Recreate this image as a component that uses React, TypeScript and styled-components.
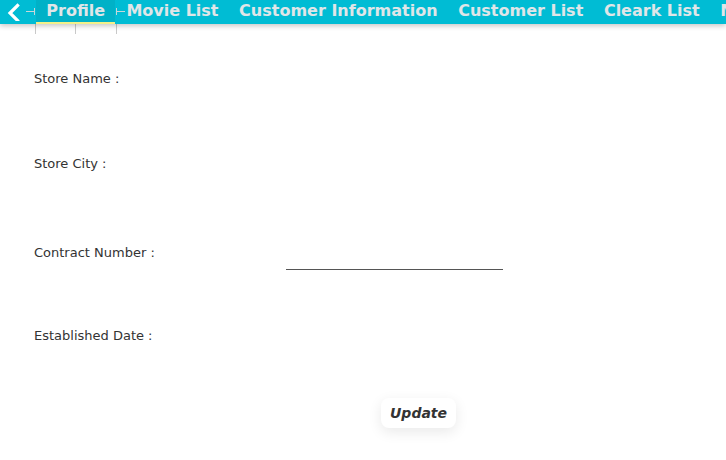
import * as React from 'react';
import styled, { createGlobalStyle } from 'styled-components';

const GlobalStyle = createGlobalStyle`
  html, body {
    margin: 0;
    padding: 0;
    background: #ffffff;
    overflow: hidden;
  }
  body {
    font-family: 'DejaVu Sans', 'Liberation Sans', sans-serif;
    color: #333333;
  }
`;

const tabs = ['Movie List', 'Customer Information', 'Customer List', 'Cleark List', 'Movies'];

const fields = [
  { label: 'Store Name :', height: 85, underline: false },
  { label: 'Store City :', height: 89, underline: false },
  { label: 'Contract Number :', height: 83, underline: true },
  { label: 'Established Date :', height: 70, underline: false },
];

const Page = styled.div`
  width: 726px;
  height: 460px;
  display: flex;
  flex-direction: column;
  overflow: hidden;
`;

const TabBar = styled.nav`
  height: 24px;
  flex: none;
  display: flex;
  align-items: stretch;
  background: #00bcd4;
  box-shadow: 0 2px 5px rgba(0, 0, 0, 0.22);
  white-space: nowrap;
  overflow: hidden;
  position: relative;
  z-index: 1;
`;

const BackButton = styled.button`
  width: 24px;
  flex: none;
  padding: 0 0 0 6px;
  border: none;
  background: transparent;
  display: flex;
  align-items: center;
  cursor: pointer;
`;

const Bracket = styled.span<{ $side: 'left' | 'right' }>`
  flex: none;
  width: ${(p) => (p.$side === 'right' ? '12px' : '11px')};
  display: flex;
  align-items: center;
  justify-content: ${(p) => (p.$side === 'right' ? 'flex-end' : 'flex-start')};
  padding: ${(p) => (p.$side === 'right' ? '0 1px 2px 2px' : '0 1px 2px 1px')};
  box-sizing: border-box;

  &::before {
    content: '';
    order: ${(p) => (p.$side === 'right' ? 0 : 1)};
    width: 8px;
    height: 1px;
    background: #c8d6d8;
  }
  &::after {
    content: '';
    order: ${(p) => (p.$side === 'right' ? 1 : 0)};
    width: 1px;
    height: 7px;
    background: #c8d6d8;
  }
`;

const Tab = styled.a<{ $active?: boolean; $flush?: boolean }>`
  flex: none;
  display: flex;
  align-items: center;
  box-sizing: border-box;
  padding: ${(p) => (p.$flush ? '0 10.3px 0 0' : '0 10.3px')};
  font-size: 16px;
  font-weight: bold;
  line-height: 22px;
  color: #e0e6e8;
  text-decoration: none;
  background: ${(p) => (p.$active ? '#00b1c7' : 'transparent')};
  border-bottom: 2px solid ${(p) => (p.$active ? '#f3f08a' : 'transparent')};
  cursor: pointer;
`;

const TickStrip = styled.div`
  height: 10px;
  flex: none;
  display: flex;
  padding-left: 35px;
  gap: 39px;

  & > span {
    width: 1px;
    height: 10px;
    background: #c9c9c9;
  }
  & > span:last-child {
    margin-left: 1px;
  }
`;

const Form = styled.form`
  display: flex;
  flex-direction: column;
  padding: 37px 0 0 34px;
`;

const Row = styled.div<{ $height: number }>`
  height: ${(p) => p.$height}px;
  display: flex;
  align-items: flex-start;
`;

const Label = styled.label`
  width: 252px;
  flex: none;
  font-size: 13px;
  line-height: 16px;
  color: #333333;
`;

const Field = styled.input<{ $underline: boolean }>`
  width: 217px;
  height: 25px;
  box-sizing: border-box;
  border: none;
  border-bottom: ${(p) => (p.$underline ? '1px solid #555555' : '1px solid transparent')};
  background: transparent;
  outline: none;
  padding: 0;
  font: inherit;
  font-size: 13px;
`;

const Actions = styled.div`
  display: flex;
  padding-left: 347px;
`;

const UpdateButton = styled.button`
  border: none;
  background: #ffffff;
  padding: 7px 9px;
  border-radius: 8px;
  box-shadow: 0 4px 14px rgba(0, 0, 0, 0.09);
  font-family: 'DejaVu Sans', sans-serif;
  font-size: 14px;
  font-weight: bold;
  font-style: italic;
  color: #333333;
  cursor: pointer;
`;

const App = () => {
  return (
    <Page>
      <GlobalStyle />
      <TabBar>
        <BackButton aria-label="Back">
          <svg width="14" height="18" viewBox="0 0 14 18">
            <polyline
              points="11.5,2.5 4,10 11.5,17.5"
              fill="none"
              stroke="#ffffff"
              strokeWidth="3.2"
              strokeLinecap="square"
            />
          </svg>
        </BackButton>
        <Bracket $side="right" />
        <Tab $active>Profile</Tab>
        <Bracket $side="left" />
        {tabs.map((t, i) => (
          <Tab key={t} $flush={i === 0}>
            {t}
          </Tab>
        ))}
      </TabBar>
      <TickStrip>
        <span />
        <span />
        <span />
      </TickStrip>
      <Form onSubmit={(e) => e.preventDefault()}>
        {fields.map((f) => (
          <Row key={f.label} $height={f.height}>
            <Label>{f.label}</Label>
            <Field $underline={f.underline} />
          </Row>
        ))}
        <Actions>
          <UpdateButton type="submit">Update</UpdateButton>
        </Actions>
      </Form>
    </Page>
  );
};

export default App;
